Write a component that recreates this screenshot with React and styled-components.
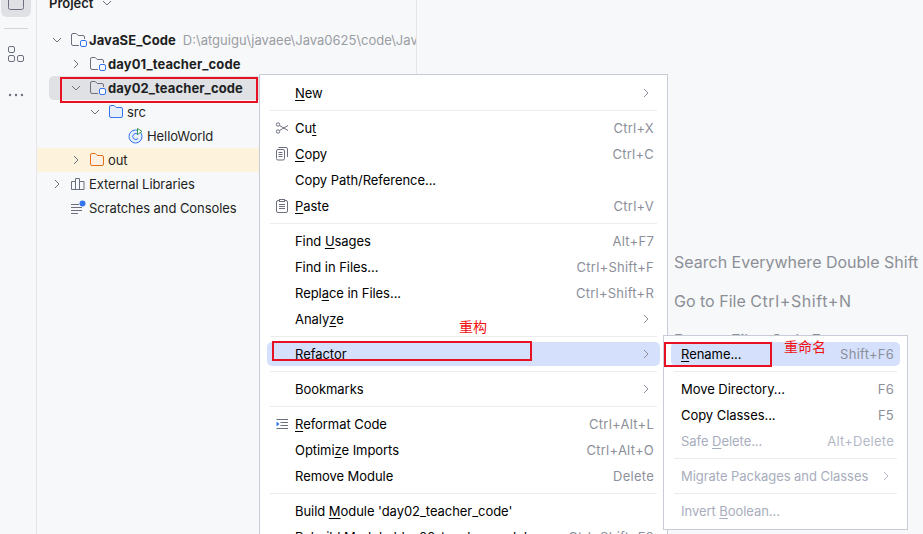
import React from "react";
import styled, { createGlobalStyle } from "styled-components";

const Global = createGlobalStyle`
  html, body {
    margin: 0;
    padding: 0;
    background: #fff;
  }
  body {
    font-family: Inter, "Noto Sans CJK SC", sans-serif;
    color: #1e1f22;
  }
`;

const Page = styled.div`
  position: relative;
  display: flex;
  width: 923px;
  height: 534px;
  overflow: hidden;
  background: #f7f8fa;
`;

const Strip = styled.aside`
  width: 36px;
  flex: none;
  display: flex;
  flex-direction: column;
  align-items: center;
  margin-top: -13px;
  border-right: 1px solid #e4e6eb;
`;

const StripButton = styled.div`
  width: 30px;
  height: 30px;
  margin-left: -4px;
  margin-top: ${p => p.$gap || 0}px;
  display: flex;
  align-items: center;
  justify-content: center;
  border-radius: 6px;
  background: ${p => (p.$active ? "#dfe1e5" : "transparent")};
`;

const StripRule = styled.div`
  width: 24px;
  height: 1px;
  margin: 11px 0 10px -4px;
  background: #d3d5db;
`;

const Panel = styled.section`
  width: 379px;
  flex: none;
  overflow: hidden;
  border-right: 1px solid #e4e6eb;
`;

const PanelHeader = styled.div`
  display: flex;
  align-items: center;
  gap: 6px;
  height: 28px;
  margin-top: -11px;
  margin-bottom: 11px;
  padding-left: 12px;
  font-size: 13px;
  font-weight: 600;
`;

const Tree = styled.div`
  display: flex;
  flex-direction: column;
  width: 379px;
`;

const TreeRow = styled.div`
  display: flex;
  align-items: center;
  flex: none;
  box-sizing: border-box;
  height: 24px;
  margin-left: ${p => (p.$selected ? 12 : 0)}px;
  padding-left: ${p => (p.$selected ? p.$indent - 12 : p.$indent)}px;
  font-size: 13px;
  white-space: nowrap;
  width: ${p => (p.$selected ? "212px" : p.$hl ? "222px" : "auto")};
  border-radius: ${p => (p.$selected ? "5px 0 0 5px" : "0")};
  background: ${p => (p.$selected ? "#dfe1e5" : p.$hl ? "#fdf3dc" : "transparent")};
`;

const Chevron = styled.span`
  width: 20px;
  flex: none;
  display: flex;
  align-items: center;
`;

const TreeIcon = styled.span`
  width: 18px;
  padding-left: 1px;
  flex: none;
  display: flex;
  align-items: center;
`;

const Label = styled.span`
  font-weight: ${p => (p.$bold ? 700 : 400)};
  letter-spacing: ${p => (p.$bold ? "0.1px" : "-0.07px")};
  margin-left: 1px;
`;

const Hint = styled.span`
  color: #9a9da3;
  margin-left: 7px;
`;

const Editor = styled.main`
  flex: 1;
  display: flex;
  flex-direction: column;
  gap: 17px;
  padding: 251px 0 0 257px;
  min-width: 0;
  white-space: nowrap;
`;

const Tip = styled.div`
  font-size: 16px;
  line-height: 22px;
  color: #8c8f96;
`;

const TipKeys = styled.span`
  letter-spacing: 0.6px;
`;

const Menu = styled.div`
  position: absolute;
  left: ${p => p.$left}px;
  top: ${p => p.$top}px;
  width: ${p => p.$width}px;
  box-sizing: border-box;
  display: flex;
  flex-direction: column;
  gap: 2px;
  padding: 6px 0;
  background: #fff;
  border: 1px solid #c9ccd6;
  font-size: 13px;
`;

const Item = styled.div`
  position: relative;
  display: flex;
  align-items: center;
  flex: none;
  height: 24px;
  margin: 0 7px;
  padding: 0 6px 0 ${p => (p.$sub ? 10 : 28)}px;
  border-radius: 5px;
  background: ${p => (p.$active ? "#d5e1fc" : "transparent")};
  color: ${p => (p.$off ? "#a8adbd" : "#000")};
`;

const ItemIcon = styled.span`
  position: absolute;
  left: 6px;
  top: 4px;
  width: 16px;
  height: 16px;
  display: flex;
`;

const ItemText = styled.span`
  flex: 1;
  letter-spacing: -0.05px;
`;

const Keys = styled.span`
  color: ${p => (p.$off ? "#b4b8c6" : "#8c8f9a")};
  letter-spacing: 0.25px;
`;

const Mn = styled.u`
  text-underline-offset: 2px;
`;

const Sep = styled.div`
  flex: none;
  height: 1px;
  margin: 3px 10px;
  background: #ebecf0;
`;

const RedBox = styled.div`
  position: absolute;
  left: ${p => p.$x}px;
  top: ${p => p.$y}px;
  width: ${p => p.$w}px;
  height: ${p => p.$h}px;
  box-sizing: border-box;
  border: 2px solid #e81123;
`;

const RedNote = styled.div`
  position: absolute;
  left: ${p => p.$x}px;
  top: ${p => p.$y}px;
  font-size: 14px;
  line-height: 16px;
  color: #f01010;
  font-family: "Noto Sans CJK SC", sans-serif;
`;

const ChevronIcon = ({ dir = "right", color = "#6c707e" }) => (
  <svg width="16" height="16" viewBox="0 0 16 16" fill="none" stroke={color} strokeWidth="1">
    {dir === "right" ? <path d="M6 4l4 4-4 4" /> : <path d="M4 6l4 4 4-4" />}
  </svg>
);

const ModuleFolder = () => (
  <svg width="18" height="16" viewBox="0 0 18 16" fill="none">
    <path d="M9 13.5H3A1.5 1.5 0 0 1 1.5 12V3A1.5 1.5 0 0 1 3 1.5h3.2l2 2H13A1.5 1.5 0 0 1 14.500 5v2" stroke="#6c707e" />
    <rect x="10.500" y="8.500" width="6" height="6" rx="1.500" stroke="#3574f0" fill="#fff" />
  </svg>
);

const Folder = ({ stroke, fill }) => (
  <svg width="18" height="16" viewBox="0 0 18 16" fill={fill} stroke={stroke}>
    <path d="M3 13.500A1.500 1.500 0 0 1 1.500 12V3A1.500 1.500 0 0 1 3 1.500h3.200l2 2H13A1.500 1.500 0 0 1 14.500 5v7a1.500 1.500 0 0 1-1.500 1.500z" />
  </svg>
);

const ClassIcon = () => (
  <svg width="18" height="16" viewBox="0 0 18 16" fill="none">
    <circle cx="7.500" cy="8.500" r="6.500" fill="#e7effd" stroke="#3574f0" />
    <path d="M10 6.500a3 3 0 1 0 0 4" stroke="#3574f0" />
    <path d="M9.500 0.500v6l4.500-3z" fill="#fff" stroke="#369650" />
  </svg>
);

const LibIcon = () => (
  <svg width="18" height="16" viewBox="0 0 18 16" fill="none" stroke="#6c707e">
    <path d="M1.500 13.500v-8h4v8M5.500 13.500v-11h4v11M9.500 13.500v-8h4.500v8zM1.500 13.500h12.500" />
  </svg>
);

const ScratchIcon = () => (
  <svg width="18" height="16" viewBox="0 0 18 16" fill="none" stroke="#6c707e">
    <path d="M1 4.500h8M1 7.500h11M1 10.500h11M1 13.500h7" />
    <circle cx="12.500" cy="3.500" r="3" fill="#3574f0" stroke="none" />
  </svg>
);

const Glyphs = {
  cut: (
    <svg width="16" height="16" viewBox="0 0 16 16" fill="none" stroke="#6c707e">
      <circle cx="5" cy="4.500" r="1.700" />
      <circle cx="5" cy="11.500" r="1.700" />
      <path d="M6.500 5.500L15 10.500M6.500 10.500L15 5.500" />
    </svg>
  ),
  copy: (
    <svg width="16" height="16" viewBox="0 0 16 16" fill="none" stroke="#6c707e">
      <rect x="3.500" y="3.500" width="8" height="10.500" rx="1.500" />
      <path d="M5.500 6.500h4M5.500 8.500h4M5.500 10.500h4M5.500 1.500H13a1.500 1.500 0 0 1 1.500 1.500v8" />
    </svg>
  ),
  paste: (
    <svg width="16" height="16" viewBox="0 0 16 16" fill="none" stroke="#6c707e">
      <rect x="3.500" y="2.500" width="11" height="12" rx="1.500" />
      <rect x="6.500" y="1.500" width="5" height="2" fill="#fff" />
      <path d="M6 6.500h6M6 8.500h6M6 10.500h6" />
    </svg>
  ),
  reformat: (
    <svg width="16" height="16" viewBox="0 0 16 16" fill="none" stroke="#6c707e">
      <path d="M3.500 3.500H15M7.500 6.500H15M7.500 9.500H15M3.500 12.500H15" />
      <path d="M3.500 5.500l3 2.500-3 2.500z" fill="#3574f0" stroke="none" />
    </svg>
  ),
};

const TREE = [
  { indent: 12, open: true, icon: <ModuleFolder />, label: "JavaSE_Code", bold: true, hint: "D:\\atguigu\\javaee\\Java0625\\code\\JavaSE_Code" },
  { indent: 31, open: false, icon: <ModuleFolder />, label: "day01_teacher_code", bold: true },
  { indent: 31, open: true, icon: <ModuleFolder />, label: "day02_teacher_code", bold: true, selected: true },
  { indent: 50, open: true, icon: <Folder stroke="#3574f0" fill="#e7effd" />, label: "src" },
  { indent: 70, icon: <ClassIcon />, label: "HelloWorld" },
  { indent: 31, open: false, icon: <Folder stroke="#e66d17" fill="#fff0e3" />, label: "out", hl: true },
  { indent: 12, open: false, icon: <LibIcon />, label: "External Libraries" },
  { indent: 12, icon: <ScratchIcon />, label: "Scratches and Consoles" },
];

const MAIN_MENU = [
  { text: <><Mn>N</Mn>ew</>, arrow: true },
  "sep",
  { text: <>Cu<Mn>t</Mn></>, keys: "Ctrl+X", icon: "cut" },
  { text: <><Mn>C</Mn>opy</>, keys: "Ctrl+C", icon: "copy" },
  { text: "Copy Path/Reference..." },
  { text: <><Mn>P</Mn>aste</>, keys: "Ctrl+V", icon: "paste" },
  "sep",
  { text: <>Find <Mn>U</Mn>sages</>, keys: "Alt+F7" },
  { text: "Find in Files...", keys: "Ctrl+Shift+F" },
  { text: <>Repl<Mn>a</Mn>ce in Files...</>, keys: "Ctrl+Shift+R" },
  { text: <>Analy<Mn>z</Mn>e</>, arrow: true },
  "sep",
  { text: "Refactor", arrow: true, active: true },
  "sep",
  { text: "Bookmarks", arrow: true },
  "sep",
  { text: <><Mn>R</Mn>eformat Code</>, keys: "Ctrl+Alt+L", icon: "reformat" },
  { text: <>Optimi<Mn>z</Mn>e Imports</>, keys: "Ctrl+Alt+O" },
  { text: "Remove Module", keys: "Delete" },
  "sep",
  { text: <>Build <Mn>M</Mn>odule 'day02_teacher_code'</> },
  { text: "Rebuild Module 'day02_teacher_code'", keys: "Ctrl+Shift+F9" },
];

const SUB_MENU = [
  { text: <><Mn>R</Mn>ename...</>, keys: "Shift+F6", active: true },
  "sep",
  { text: "Move Directory...", keys: "F6" },
  { text: "Copy Classes...", keys: "F5" },
  { text: <>Safe <Mn>D</Mn>elete...</>, keys: "Alt+Delete", off: true },
  "sep",
  { text: "Migrate Packages and Classes", arrow: true, off: true },
  "sep",
  { text: <>Invert <Mn>B</Mn>oolean...</>, off: true },
];

function MenuList({ items, sub, ...rest }) {
  return (
    <Menu {...rest}>
      {items.map((item, i) =>
        item === "sep" ? (
          <Sep key={i} />
        ) : (
          <Item key={i} $sub={sub} $active={item.active} $off={item.off}>
            {item.icon && <ItemIcon>{Glyphs[item.icon]}</ItemIcon>}
            <ItemText>{item.text}</ItemText>
            {item.keys && <Keys $off={item.off}>{item.keys}</Keys>}
            {item.arrow && <ChevronIcon color={item.off ? "#b4b8c6" : "#8c8f9a"} />}
          </Item>
        )
      )}
    </Menu>
  );
}

export default function App() {
  return (
    <Page>
      <Global />
      <Strip>
        <StripButton $active>
          <svg width="18" height="18" viewBox="0 0 18 18" fill="none" stroke="#6c707e">
            <rect x="1.500" y="1.500" width="15" height="15" rx="2" />
          </svg>
        </StripButton>
        <StripRule />
        <StripButton>
          <svg width="18" height="18" viewBox="0 0 18 18" fill="none" stroke="#6c707e">
            <rect x="1.500" y="1.500" width="6" height="6" rx="1.500" />
            <rect x="1.500" y="10.500" width="6" height="6" rx="1.500" />
            <rect x="10.500" y="10.500" width="6" height="6" rx="1.500" />
          </svg>
        </StripButton>
        <StripButton $gap={11}>
          <svg width="18" height="18" viewBox="0 0 18 18" fill="#6c707e">
            <circle cx="3" cy="9" r="1.200" />
            <circle cx="9" cy="9" r="1.200" />
            <circle cx="15" cy="9" r="1.200" />
          </svg>
        </StripButton>
      </Strip>
      <Panel>
        <PanelHeader>
          Project
          <ChevronIcon dir="down" />
        </PanelHeader>
        <Tree>
          {TREE.map(row => (
            <TreeRow key={row.label} $indent={row.indent} $hl={row.hl} $selected={row.selected}>
              <Chevron>
                {row.open !== undefined && <ChevronIcon dir={row.open ? "down" : "right"} />}
              </Chevron>
              <TreeIcon>{row.icon}</TreeIcon>
              <Label $bold={row.bold}>{row.label}</Label>
              {row.hint && <Hint>{row.hint}</Hint>}
            </TreeRow>
          ))}
        </Tree>
      </Panel>
      <Editor>
        <Tip>Search Everywhere Double Shift</Tip>
        <Tip>Go to File <TipKeys>Ctrl+Shift+N</TipKeys></Tip>
        <Tip>Recent Files <TipKeys>Ctrl+E</TipKeys></Tip>
      </Editor>
      <MenuList items={MAIN_MENU} $left={259} $top={74} $width={409} />
      <MenuList items={SUB_MENU} sub $left={663} $top={335} $width={245} />
      <RedBox $x={60} $y={77} $w={198} $h={26} />
      <RedBox $x={272} $y={341} $w={260} $h={20} />
      <RedBox $x={664} $y={342} $w={108} $h={25} />
      <RedNote $x={459} $y={318}>重构</RedNote>
      <RedNote $x={784} $y={338}>重命名</RedNote>
    </Page>
  );
}
